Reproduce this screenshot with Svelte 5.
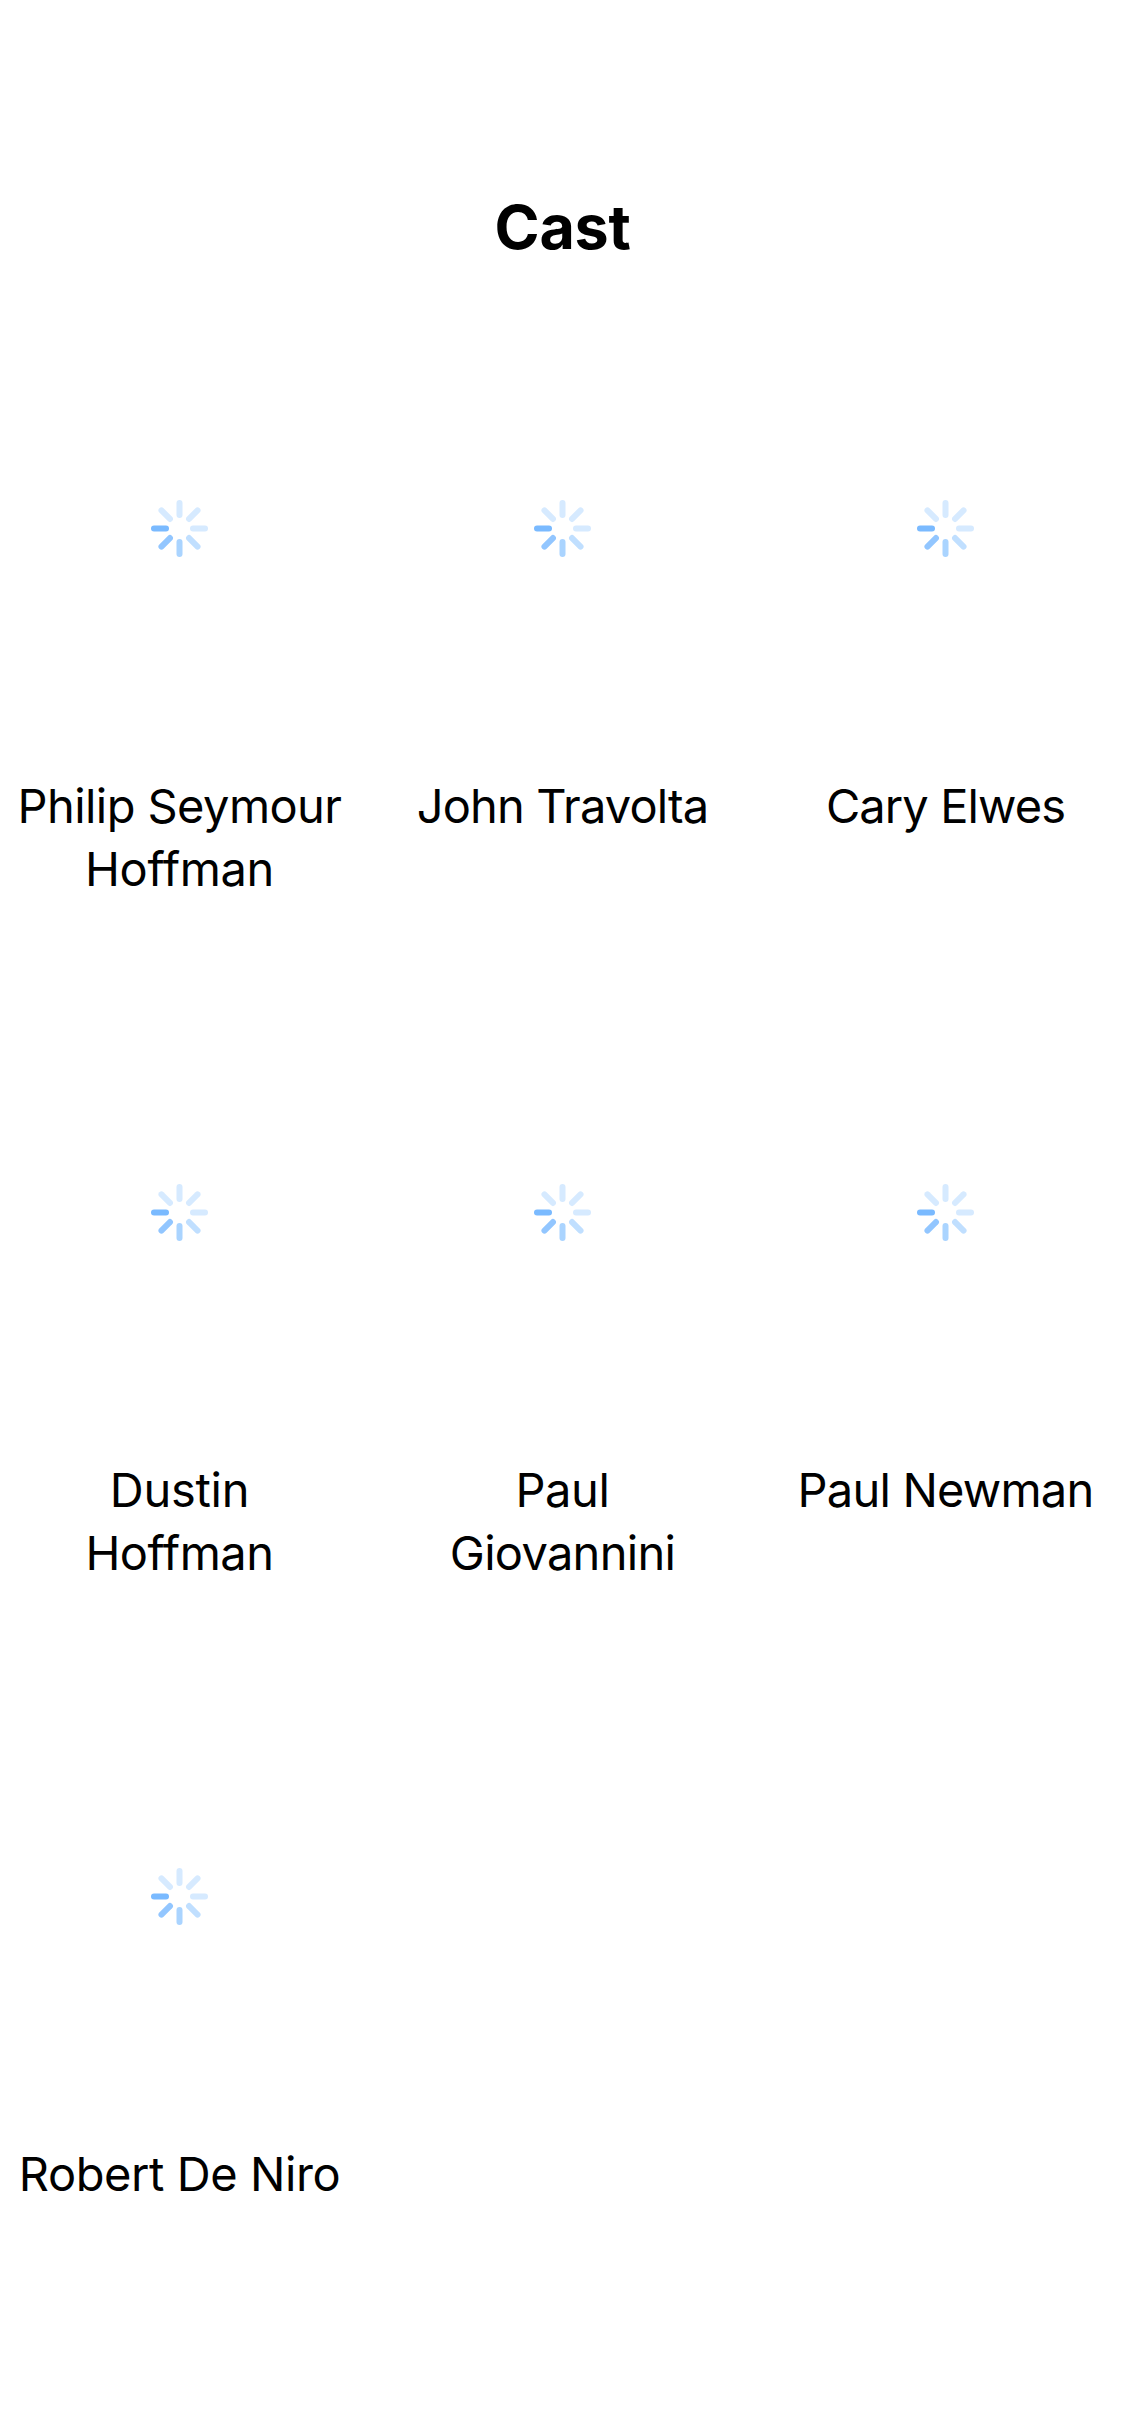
<script>
  // Each line of a name carries its own tracking, in pixels.
  const cast = [
    [['Philip Seymour', -0.56], ['Hoffman', -0.35]],
    [['John Travolta', -0.85]],
    [['Cary Elwes', -0.9]],
    [['Dustin', -0.25], ['Hoffman', -0.45]],
    [['Paul', -0.4], ['Giovannini', -0.7]],
    [['Paul Newman', -0.8]],
    [['Robert De Niro', -0.42]],
  ];
  // Spokes run clockwise from the top.
  const spokes = ['#d6eaff', '#d6eaff', '#d6eaff', '#c0dfff', '#aad4ff', '#92c6ff', '#7abaff', '#d6eaff'];
</script>

<main>
  <h1>Cast</h1>
  <ul>
    {#each cast as lines}
      <li>
        <div class="photo">
          <svg viewBox="-29.5 -29.5 60 60" width="60" height="60" aria-label="Loading">
            {#each spokes as color, i}
              <line x1="0" y1="-13.5" x2="0" y2="-25.5" stroke={color} transform="rotate({i * 45})" />
            {/each}
          </svg>
        </div>
        <p>
          {#each lines as [text, tracking]}<span style:letter-spacing="{tracking}px">{text}</span>{/each}
        </p>
      </li>
    {/each}
  </ul>
</main>

<style>
  :global(body) {
    margin: 0;
    background: #fff;
  }
  main {
    box-sizing: border-box;
    height: 2436px;
    padding-top: 190px;
    overflow: hidden;
    color: #000;
    font-family: Inter, 'Liberation Sans', sans-serif;
  }
  h1 {
    margin: 0;
    text-align: center;
    font-size: 61px;
    line-height: 74px;
    font-weight: 700;
    letter-spacing: -0.3px;
  }
  ul {
    display: grid;
    grid-template-columns: repeat(3, 359px);
    grid-auto-rows: 684px;
    column-gap: 24px;
    margin: 0;
    padding: 0;
    list-style: none;
  }
  .photo {
    box-sizing: border-box;
    display: flex;
    align-items: center;
    justify-content: center;
    height: 510px;
    padding-top: 19px;
  }
  svg {
    stroke-width: 6;
    stroke-linecap: round;
  }
  p {
    margin: 0;
    text-align: center;
    font-size: 47px;
    line-height: 63px;
    white-space: nowrap;
  }
  span {
    display: block;
  }
</style>
